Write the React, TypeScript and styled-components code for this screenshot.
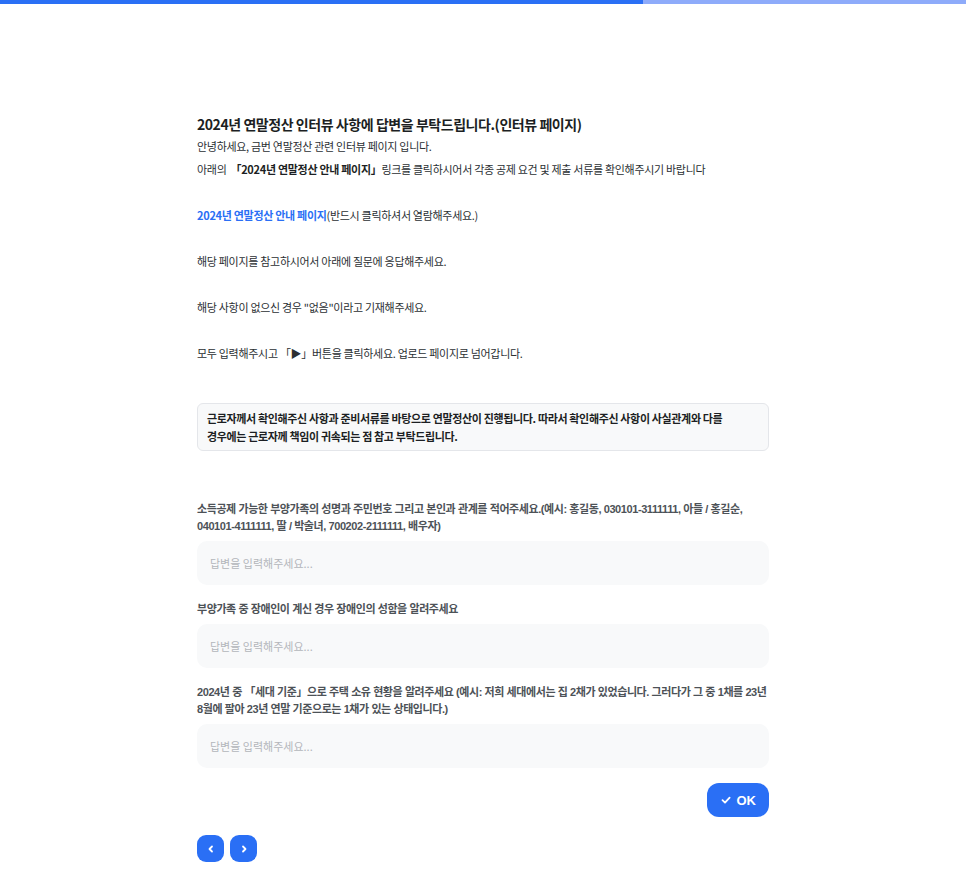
import React from 'react';
import styled, { createGlobalStyle } from 'styled-components';

const GlobalStyle = createGlobalStyle`
  html, body {
    margin: 0;
    padding: 0;
    background: #ffffff;
  }
  body {
    font-family: "Noto Sans CJK KR", "Noto Sans", sans-serif;
    color: #1f2329;
  }
`;

const ProgressTrack = styled.div`
  height: 4px;
  background: #8eabfa;
  display: flex;
`;

const ProgressFill = styled.div`
  height: 100%;
  background: #2a6ff5;
`;

const Page = styled.main`
  width: 572px;
  margin: 0 auto;
  padding: 109px 0 40px;
  display: flex;
  flex-direction: column;
`;

const Title = styled.h1`
  margin: 0;
  font-size: 14px;
  line-height: 22px;
  font-weight: 700;
  letter-spacing: -0.45px;
  color: #1c1f23;
`;

const Paragraph = styled.p<{ $gap?: number }>`
  margin: ${({ $gap }) => $gap ?? 0}px 0 0;
  font-size: 11px;
  line-height: 23px;
  color: #2b2f33;
  letter-spacing: -0.3px;
`;

const Strong = styled.b`
  font-weight: 700;
  color: #1c1f23;
  margin-left: 4px;
`;

const GuideLink = styled.a`
  color: #2a6ff5;
  font-weight: 700;
  text-decoration: none;
`;

const Notice = styled.div`
  margin-top: 38px;
  padding: 5px 9px;
  background: #f8f9fa;
  border: 1px solid #e4e6ea;
  border-radius: 6px;
  font-size: 11px;
  line-height: 18px;
  font-weight: 700;
  letter-spacing: -0.35px;
  color: #1c1f23;
`;

const Questions = styled.div`
  margin-top: 50px;
  display: flex;
  flex-direction: column;
  gap: 16px;
`;

const Field = styled.div`
  display: flex;
  flex-direction: column;
  gap: 6px;
`;

const Label = styled.label`
  font-family: "Liberation Sans", "Noto Sans CJK KR", sans-serif;
  font-size: 11px;
  line-height: 17px;
  font-weight: 700;
  color: #4d5257;
  letter-spacing: -0.42px;
`;

const Answer = styled.input`
  height: 44px;
  box-sizing: border-box;
  border: none;
  border-radius: 10px;
  background: #f8f9fa;
  padding: 0 13px;
  font-family: inherit;
  font-size: 11px;
  color: #333;
  outline: none;
  &::placeholder {
    color: #b3b6ba;
  }
`;

const Actions = styled.div`
  display: flex;
  justify-content: flex-end;
  margin-top: 15px;
`;

const OkButton = styled.button`
  height: 34px;
  padding: 0 13px 0 14px;
  border: none;
  border-radius: 12px;
  background: #2a6ff5;
  color: #fff;
  font-family: "Liberation Sans", Arial, sans-serif;
  font-size: 13px;
  font-weight: 700;
  display: flex;
  align-items: center;
  gap: 6px;
  cursor: pointer;
`;

const Nav = styled.div`
  display: flex;
  gap: 6px;
  margin-top: 18px;
`;

const NavButton = styled.button`
  width: 27px;
  height: 27px;
  border: none;
  border-radius: 9px;
  background: #2a6ff5;
  display: flex;
  align-items: center;
  justify-content: center;
  padding: 0;
  cursor: pointer;
`;

const Check = () => (
  <svg width="10" height="10" viewBox="0 0 10 10">
    <path d="M1.5 5.2 L4 7.6 L8.6 2.6" fill="none" stroke="#fff" strokeWidth="1.8" strokeLinecap="round" strokeLinejoin="round" />
  </svg>
);

const Chevron = ({ dir }: { dir: 'left' | 'right' }) => (
  <svg width="10" height="10" viewBox="0 0 10 10">
    <path
      d={dir === 'left' ? 'M6 2.5 L3.5 5 L6 7.5' : 'M4 2.5 L6.5 5 L4 7.5'}
      fill="none"
      stroke="#fff"
      strokeWidth="1.8"
      strokeLinecap="round"
      strokeLinejoin="round"
    />
  </svg>
);

const questions = [
  '소득공제 가능한 부양가족의 성명과 주민번호 그리고 본인과 관계를 적어주세요.(예시: 홍길동, 030101-3111111, 아들 / 홍길순, 040101-4111111, 딸 / 박술녀, 700202-2111111, 배우자)',
  '부양가족 중 장애인이 계신 경우 장애인의 성함을 알려주세요',
  '2024년 중 「세대 기준」으로 주택 소유 현황을 알려주세요 (예시: 저희 세대에서는 집 2채가 있었습니다. 그러다가 그 중 1채를 23년 8월에 팔아 23년 연말 기준으로는 1채가 있는 상태입니다.)',
];

const App: React.FC = () => (
  <>
    <GlobalStyle />
    <ProgressTrack>
      <ProgressFill style={{ width: `${(643 / 966) * 100}%` }} />
    </ProgressTrack>
    <Page>
      <Title>2024년 연말정산 인터뷰 사항에 답변을 부탁드립니다.(인터뷰 페이지)</Title>
      <Paragraph>안녕하세요, 금번 연말정산 관련 인터뷰 페이지 입니다.</Paragraph>
      <Paragraph>
        아래의<Strong>「2024년 연말정산 안내 페이지」</Strong>링크를 클릭하시어서 각종 공제 요건 및 제출 서류를 확인해주시기 바랍니다
      </Paragraph>
      <Paragraph $gap={23}>
        <GuideLink href="#">2024년 연말정산 안내 페이지</GuideLink>(반드시 클릭하셔서 열람해주세요.)
      </Paragraph>
      <Paragraph $gap={23}>해당 페이지를 참고하시어서 아래에 질문에 응답해주세요.</Paragraph>
      <Paragraph $gap={23}>해당 사항이 없으신 경우 "없음"이라고 기재해주세요.</Paragraph>
      <Paragraph $gap={23}>모두 입력해주시고 「▶」버튼을 클릭하세요. 업로드 페이지로 넘어갑니다.</Paragraph>
      <Notice>
        근로자께서 확인해주신 사항과 준비서류를 바탕으로 연말정산이 진행됩니다. 따라서 확인해주신 사항이 사실관계와 다를
        <br />
        경우에는 근로자께 책임이 귀속되는 점 참고 부탁드립니다.
      </Notice>
      <Questions>
        {questions.map((q) => (
          <Field key={q}>
            <Label>{q}</Label>
            <Answer placeholder="답변을 입력해주세요..." />
          </Field>
        ))}
      </Questions>
      <Actions>
        <OkButton>
          <Check />
          OK
        </OkButton>
      </Actions>
      <Nav>
        <NavButton aria-label="이전">
          <Chevron dir="left" />
        </NavButton>
        <NavButton aria-label="다음">
          <Chevron dir="right" />
        </NavButton>
      </Nav>
    </Page>
  </>
);

export default App;
